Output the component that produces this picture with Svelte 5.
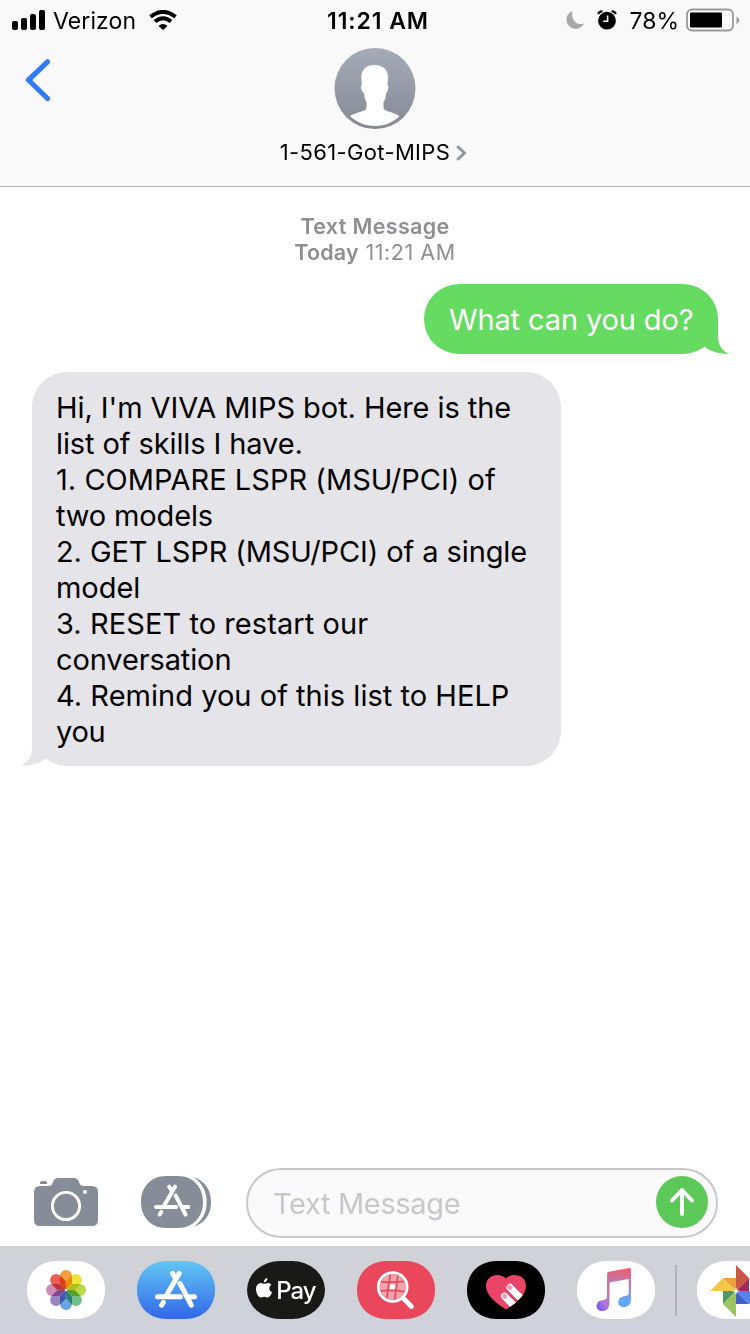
<script>
  const lines = [
    { text: "Hi, I'm VIVA MIPS bot. Here is the", spacing: -0.07 },
    { text: 'list of skills I have.', spacing: -0.1 },
    { text: '1. COMPARE LSPR (MSU/PCI) of', spacing: 0.03 },
    { text: 'two models', spacing: -0.15 },
    { text: '2. GET LSPR (MSU/PCI) of a single', spacing: -0.1 },
    { text: 'model', spacing: -0.05 },
    { text: '3. RESET to restart our', spacing: 0.07 },
    { text: 'conversation', spacing: -0.12 },
    { text: '4. Remind you of this list to HELP', spacing: 0.03 },
    { text: 'you', spacing: -0.3 }
  ];
  const petals = ['#f2a03c', '#f0e23c', '#b9d84c', '#6fbf8b', '#6aa7e0', '#9b86c4', '#cf8ab8', '#ea5f55'];
  const pill = 'M30 0H48C66 0 78 12 78 29S66 58 48 58H30C12 58 0 46 0 29S12 0 30 0Z';
  const heart = 'M39 48.500C30 43 19 34.500 19 25C19 13.500 33 11 39 17.500C45 11 59 13.500 59 25C59 34.500 48 43 39 48.500Z';
  const storeGlyph = 'M42.3 12.3L29.7 34M26.4 41.3L24.6 44.2M20.4 35.7H43.5M52.5 35.7H57.5M43 22.5L54.3 44.2M35.5 12.3L38.3 16.7';
</script>

<div class="phone">
  <header>
    <div class="status">
      <div class="side left">
        <svg width="33" height="20" viewBox="0 0 33 20"><rect y="11" width="6" height="9" rx="2"/><rect x="9" y="8" width="6" height="12" rx="2"/><rect x="18" y="4" width="6" height="16" rx="2"/><rect x="27" width="6" height="20" rx="2"/></svg>
        <span class="carrier">Verizon</span>
        <svg class="wifi" width="28" height="20" viewBox="0 0 28 20"><g fill="none" stroke="#000" stroke-width="3.900"><path d="M1.500 6.800Q14 -3 26.500 6.800"/><path d="M6 11.600Q14 5 22 11.600"/></g><path d="M9.500 15.900Q14 12 18.500 15.900L14 20Z"/></svg>
      </div>
      <strong class="clock">11:21 AM</strong>
      <div class="side right">
        <svg width="18" height="18" viewBox="0 0 18 18"><path d="M6.500 0A9.200 9.200 0 1 0 18 12.500C11 15 4.500 9 6.500 0Z" fill="#aaa"/></svg>
        <svg class="alarm" width="20" height="20" viewBox="0 0 20 20"><circle cx="10" cy="10.700" r="8.900"/><path d="M10.600 5.500V11.200H6.200" fill="none" stroke="#f9f9f9" stroke-width="1.600"/><path d="M1.200 4Q2.500 1.200 5.400 1.500M18.800 4Q17.500 1.200 14.600 1.500" fill="none" stroke="#000" stroke-width="2.200"/></svg>
        <span class="percent">78%</span>
        <svg width="54" height="24" viewBox="0 0 54 24"><rect x="1" y="1.500" width="46" height="21" rx="5" fill="none" stroke="#999" stroke-width="1.800"/><rect x="4" y="4.500" width="32" height="15" rx="1"/><path d="M50.500 8.500Q56 12 50.500 16.500Z" fill="#999"/></svg>
      </div>
    </div>
    <div class="nav">
      <svg class="back" width="26" height="44" viewBox="0 0 26 44"><path d="M22.500 3.800L3.500 22L22.500 40.500" fill="none" stroke="#347cf7" stroke-width="5.200" stroke-linecap="round" stroke-linejoin="round"/></svg>
      <div class="contact">
        <svg width="82" height="82" viewBox="0 0 82 82">
          <defs><linearGradient id="av" x2="0" y2="1"><stop stop-color="#a6abb9"/><stop offset="1" stop-color="#858994"/></linearGradient></defs>
          <circle cx="41" cy="40.500" r="40.500" fill="url(#av)"/>
          <path d="M41 17C48 17 54 21 54 29L53.500 37C55 37 54.500 43 52 45.500C51.800 50 51 52 49.500 54V60C50 64 59 63.500 65.500 68C60 74 51 78 41 78S22 74 16 68C23 63.500 32 64 32.500 60V54C31 52 30.500 50 30.200 45.500C27 43 26 37 27.800 37L27.300 28C28 20 34 17 41 17Z" fill="#fff"/>
        </svg>
        <div class="name"><span>1-561-Got-MIPS</span><svg width="11" height="16" viewBox="0 0 11 16"><path d="M2 2L8.500 8L2 14" fill="none" stroke="#8e939d" stroke-width="2.800" stroke-linecap="round"/></svg></div>
      </div>
    </div>
  </header>

  <main>
    <div class="stamp"><b>Text Message</b><div class="when"><b>Today</b> <span>11:21 AM</span></div></div>
    <div class="bubble sent">
      <span>What can you do?</span>
      <svg class="tail" width="26" height="36" viewBox="0 0 26 36"><path d="M15 0V18C15 27 19 33 26 35.800C15 36 7 33 2 29L0 0Z" fill="#66db62"/></svg>
    </div>
    <div class="bubble received">
      {#each lines as line}<div class="line" style="letter-spacing:{line.spacing}px">{line.text}</div>{/each}
      <svg class="tail" width="27" height="36" viewBox="0 0 27 36"><path d="M11 0V18C11 27 7 32 0 35.600C11 36 19 33 24.500 28.700L27 0Z" fill="#e5e4e9"/></svg>
    </div>
  </main>

  <div class="composer">
    <svg width="64" height="48" viewBox="0 0 64 48"><path d="M6 8H14C17 8 18 7 19 4Q20.500 0 24 0H40Q43.500 0 45 4C46 7 47.500 8 50 8H58Q64 8 64 14V42Q64 48 58 48H6Q0 48 0 42V14Q0 8 6 8Z" fill="#868c98"/><path d="M6 6V4.600Q6 3 8 3H11Q13 3 13 4.600V6Z" fill="#868c98"/><circle cx="32" cy="28" r="13.600" fill="none" stroke="#fff" stroke-width="2.900"/><circle cx="51" cy="14" r="2" fill="#fff"/></svg>
    <svg class="apps" width="70" height="52" viewBox="0 0 70 52"><path d="M25 0H37C52 0 62 11 62 26S52 52 37 52H25C10 52 0 41 0 26S10 0 25 0ZM52.500 1C64 5 70 14 70 26S64 47 52.500 51C61 45 65.700 37 65.700 26S61 7 52.500 1Z" fill="#868c98"/><path d={storeGlyph} transform="translate(-2.700 0) scale(.87)" fill="none" stroke="#fff" stroke-width="4.600" stroke-linecap="round"/></svg>
    <div class="field">
      <span>Text Message</span>
      <svg width="52" height="52" viewBox="0 0 52 52"><circle cx="26" cy="26" r="26" fill="#5dc959"/><path d="M26 38V14M16 24.500L26 14.200L36 24.500" fill="none" stroke="#fff" stroke-width="3.900" stroke-linecap="round" stroke-linejoin="round"/></svg>
    </div>
  </div>

  <footer>
    <svg class="app" viewBox="0 0 78 58"><path d={pill} fill="#fff"/>
      <g class="petals" transform="translate(39 29)">{#each petals as color, i}<path d="M0 0L-6 -6.500V-14a6 6 0 0 1 12 0V-6.500Z" fill={color} transform="rotate({i * 45})"/>{/each}</g>
      <circle cx="39" cy="29" r="1.300" fill="#fff"/></svg>
    <svg class="app" viewBox="0 0 78 58"><defs><linearGradient id="store" x2="0" y2="1"><stop stop-color="#63c7f5"/><stop offset="1" stop-color="#3267e8"/></linearGradient></defs><path d={pill} fill="url(#store)"/><path d={storeGlyph} fill="none" stroke="#fff" stroke-width="5" stroke-linecap="round"/></svg>
    <div class="pay">
      <svg width="16" height="20" viewBox="0 0 16 20"><path d="M8 5.800C9.500 5.800 10.500 4.900 12 4.900C13.500 4.900 14.800 5.700 15.400 6.800C12.300 8.600 12.800 13 16 14.200C15 17 13.400 19.500 11.700 19.500C10.300 19.500 9.900 18.700 8.200 18.700C6.500 18.700 6 19.500 4.700 19.500C2.800 19.500 0 15.500 0 11.200C0 7 2.500 4.900 4.800 4.900C6.200 4.900 7.200 5.800 8 5.800ZM7.800 4.500C7.700 2.400 9.300 .5 11.400 .1C11.700 2.300 9.900 4.500 7.800 4.500Z" fill="#fff"/></svg>
      <span>Pay</span>
    </div>
    <svg class="app" viewBox="0 0 78 58"><path d={pill} fill="#ea475c"/><defs><clipPath id="lens"><circle cx="35.700" cy="26" r="12.700"/></clipPath></defs>
      <g clip-path="url(#lens)"><path d="M22 13H50V39H22Z" fill="#f5a3ae"/><path d="M32.500 23.500H38.500V28.500H32.500Z" fill="#fff"/><path d="M33.500 12Q31.500 26 29.500 39M41 12Q39.500 26 37.500 39M22 20.500Q36 22 50 20M22 30Q36 28.500 50 31" fill="none" stroke="#ea475c" stroke-width="1.700"/></g>
      <circle cx="35.700" cy="26" r="14.400" fill="none" stroke="#fff" stroke-width="2.800"/><path d="M46 37L54.500 45.500" stroke="#fff" stroke-width="4.800" stroke-linecap="round"/></svg>
    <svg class="app" viewBox="0 0 78 58"><path d={pill}/><path d={heart} fill="#ec4469"/><defs><clipPath id="heartClip"><path d={heart}/></clipPath></defs>
      <g clip-path="url(#heartClip)" stroke-linecap="round"><path d="M43 26.500L62 45.500" stroke="#c42a50" stroke-width="8.600"/><path d="M43 26.500L62 45.500" stroke="#fff" stroke-width="7.400"/><path d="M37.500 35.200L53 50.700" stroke="#c42a50" stroke-width="8.600"/><path d="M37.500 35.200L53 50.700" stroke="#fff" stroke-width="7.400"/><path d="M42.500 26L43.100 26.600M37.200 34.900L37.800 35.500" stroke="#f3a0b5" stroke-width="4.800"/></g></svg>
    <svg class="app" viewBox="0 0 78 58"><path d={pill} fill="#fff"/><defs><linearGradient id="n1" x1=".8" y1="0" x2=".2" y2="1"><stop stop-color="#d76c90"/><stop offset=".3" stop-color="#d070a4"/><stop offset=".65" stop-color="#a978dc"/><stop offset="1" stop-color="#7b55f4"/></linearGradient><linearGradient id="n2" x2="0" y2="1"><stop stop-color="#ee5c66"/><stop offset=".22" stop-color="#ce7199"/><stop offset=".5" stop-color="#a18ad4"/><stop offset=".75" stop-color="#65a8f5"/><stop offset="1" stop-color="#56a4f7"/></linearGradient></defs>
      <path d="M30.100 13Q30.100 11 32 10.700L52 7Q54 6.600 54 8.500V38C54 43 51.500 46 47 46C43.500 46 41.300 44 41.300 41C41.300 36 46 35.500 49.500 34.700Q51.700 34 51.700 32V18L32.300 21.500V42C32.300 47 29.500 50 25 50C21.500 50 19.700 48 19.700 45.300C19.700 40 24 39.700 28 38.800Q30.100 38 30.100 36Z" fill="url(#n2)"/><path d="M30.100 20V36Q30.100 38 28 38.800C24 39.700 19.700 40 19.700 45.300C19.700 48 21.500 50 25 50C29.500 50 32.300 47 32.300 42V21Z" fill="url(#n1)"/></svg>
    <i class="divider"></i>
    <svg class="app" viewBox="0 0 78 58"><path d={pill} fill="#fff"/><path d="M39 4V30L52 17Z" fill="#cc5646"/><path d="M52 17V30H39Z" fill="#a22b59"/><path d="M13 30L26 17L39 30Z" fill="#f5c746"/><path d="M26 17H39V30Z" fill="#eda13c"/><path d="M26 30H39L26 43Z" fill="#4c9a62"/><path d="M26 43L39 30V56Z" fill="#9cc35f"/><path d="M39 30H65L52 43Z" fill="#5484eb"/><path d="M39 30L52 43H39Z" fill="#405fc9"/><path d="M39 26L40 29L43 30L40 31L39 34L38 31L35 30L38 29Z" fill="#fff"/></svg>
  </footer>
</div>

<style>
  :global(body) { margin: 0; }
  .phone { width: 750px; height: 1334px; display: flex; flex-direction: column; overflow: hidden; background: #fff; color: #000; font-family: Inter, "Liberation Sans", sans-serif; }
  svg { display: block; flex: none; }
  span, b, strong, .line { white-space: nowrap; }
  header { box-sizing: border-box; height: 187px; flex: none; background: #f9f9f9; border-bottom: 1px solid #b2b2b2; }
  .status { height: 40px; display: grid; grid-template-columns: 1fr auto 1fr; align-items: center; }
  .side { display: flex; align-items: center; font-size: 23px; }
  .left { padding-left: 12px; }
  .right { justify-content: flex-end; padding-right: 10px; }
  .side span, .clock { padding-top: 1px; }
  .carrier { margin-left: 8px; letter-spacing: .1px; }
  .wifi { margin-left: 13px; }
  .clock { font-size: 23px; font-weight: 600; letter-spacing: .9px; padding-left: 6px; }
  .alarm { margin-left: 13px; }
  .percent { margin: 0 7px 0 12px; }
  .nav { display: grid; grid-template-columns: 1fr auto 1fr; }
  .back { margin: 18px 0 0 25px; }
  .contact { display: flex; flex-direction: column; align-items: center; padding: 8px 1px 0 0; }
  .name { display: flex; align-items: center; gap: 6px; margin: 9px 2px 0 0; font-size: 22px; line-height: 26px; letter-spacing: .35px; }
  .name svg { margin-top: 2px; }
  main { flex: 1; display: flex; flex-direction: column; padding: 26px 32px 0; }
  .stamp { text-align: center; color: #8e8e93; font-size: 21.500px; line-height: 26px; height: 71px; }
  .stamp b { font-weight: 600; letter-spacing: .35px; }
  .stamp .when { letter-spacing: .55px; }
  .when b { letter-spacing: .15px; }
  .bubble { position: relative; box-sizing: border-box; font-size: 29px; line-height: 36px; }
  .sent { align-self: flex-end; width: 294px; height: 70px; padding: 18px 25px 16px; border-radius: 35px; background: #66db62; color: #fff; letter-spacing: -.13px; }
  .received { align-self: flex-start; width: 529px; height: 394px; margin-top: 18px; padding: 18px 24px 16px; border-radius: 35px; background: #e5e4e9; }
  .tail { position: absolute; bottom: 0; }
  .sent .tail { right: -11px; }
  .received .tail { left: -11px; }
  .composer { height: 78px; box-sizing: border-box; flex: none; display: flex; align-items: center; padding: 0 32px 9px 34px; }
  .composer > svg { margin-bottom: 2px; }
  .apps { margin-left: 43px; }
  .field { flex: 1; box-sizing: border-box; height: 70px; margin-left: 35px; border: 2px solid #c7c7cc; border-radius: 35px; background: #fafafa; display: flex; align-items: center; justify-content: space-between; padding: 0 8px 2px 25px; color: #c7c7cc; font-size: 29px; letter-spacing: -.35px; }
  .field span { padding-top: 4px; }
  footer { height: 88px; flex: none; box-sizing: border-box; display: flex; align-items: flex-start; gap: 32px; padding: 15px 0 0 27px; background: linear-gradient(#d1d2d6, #cfd2da); }
  .app { width: 78px; height: 58px; }
  .petals path { mix-blend-mode: multiply; }
  .petals { isolation: isolate; }
  .pay { width: 78px; height: 58px; flex: none; display: flex; align-items: center; justify-content: center; gap: 4px; border-radius: 33px / 29px; background: #191917; color: #fff; font-size: 24px; font-weight: 500; letter-spacing: -1px; }
  .pay svg { margin-top: -5px; }
  .divider { width: 2px; height: 51px; flex: none; margin: 4px -12px 0 -12px; background: #b0b2b7; }
</style>
